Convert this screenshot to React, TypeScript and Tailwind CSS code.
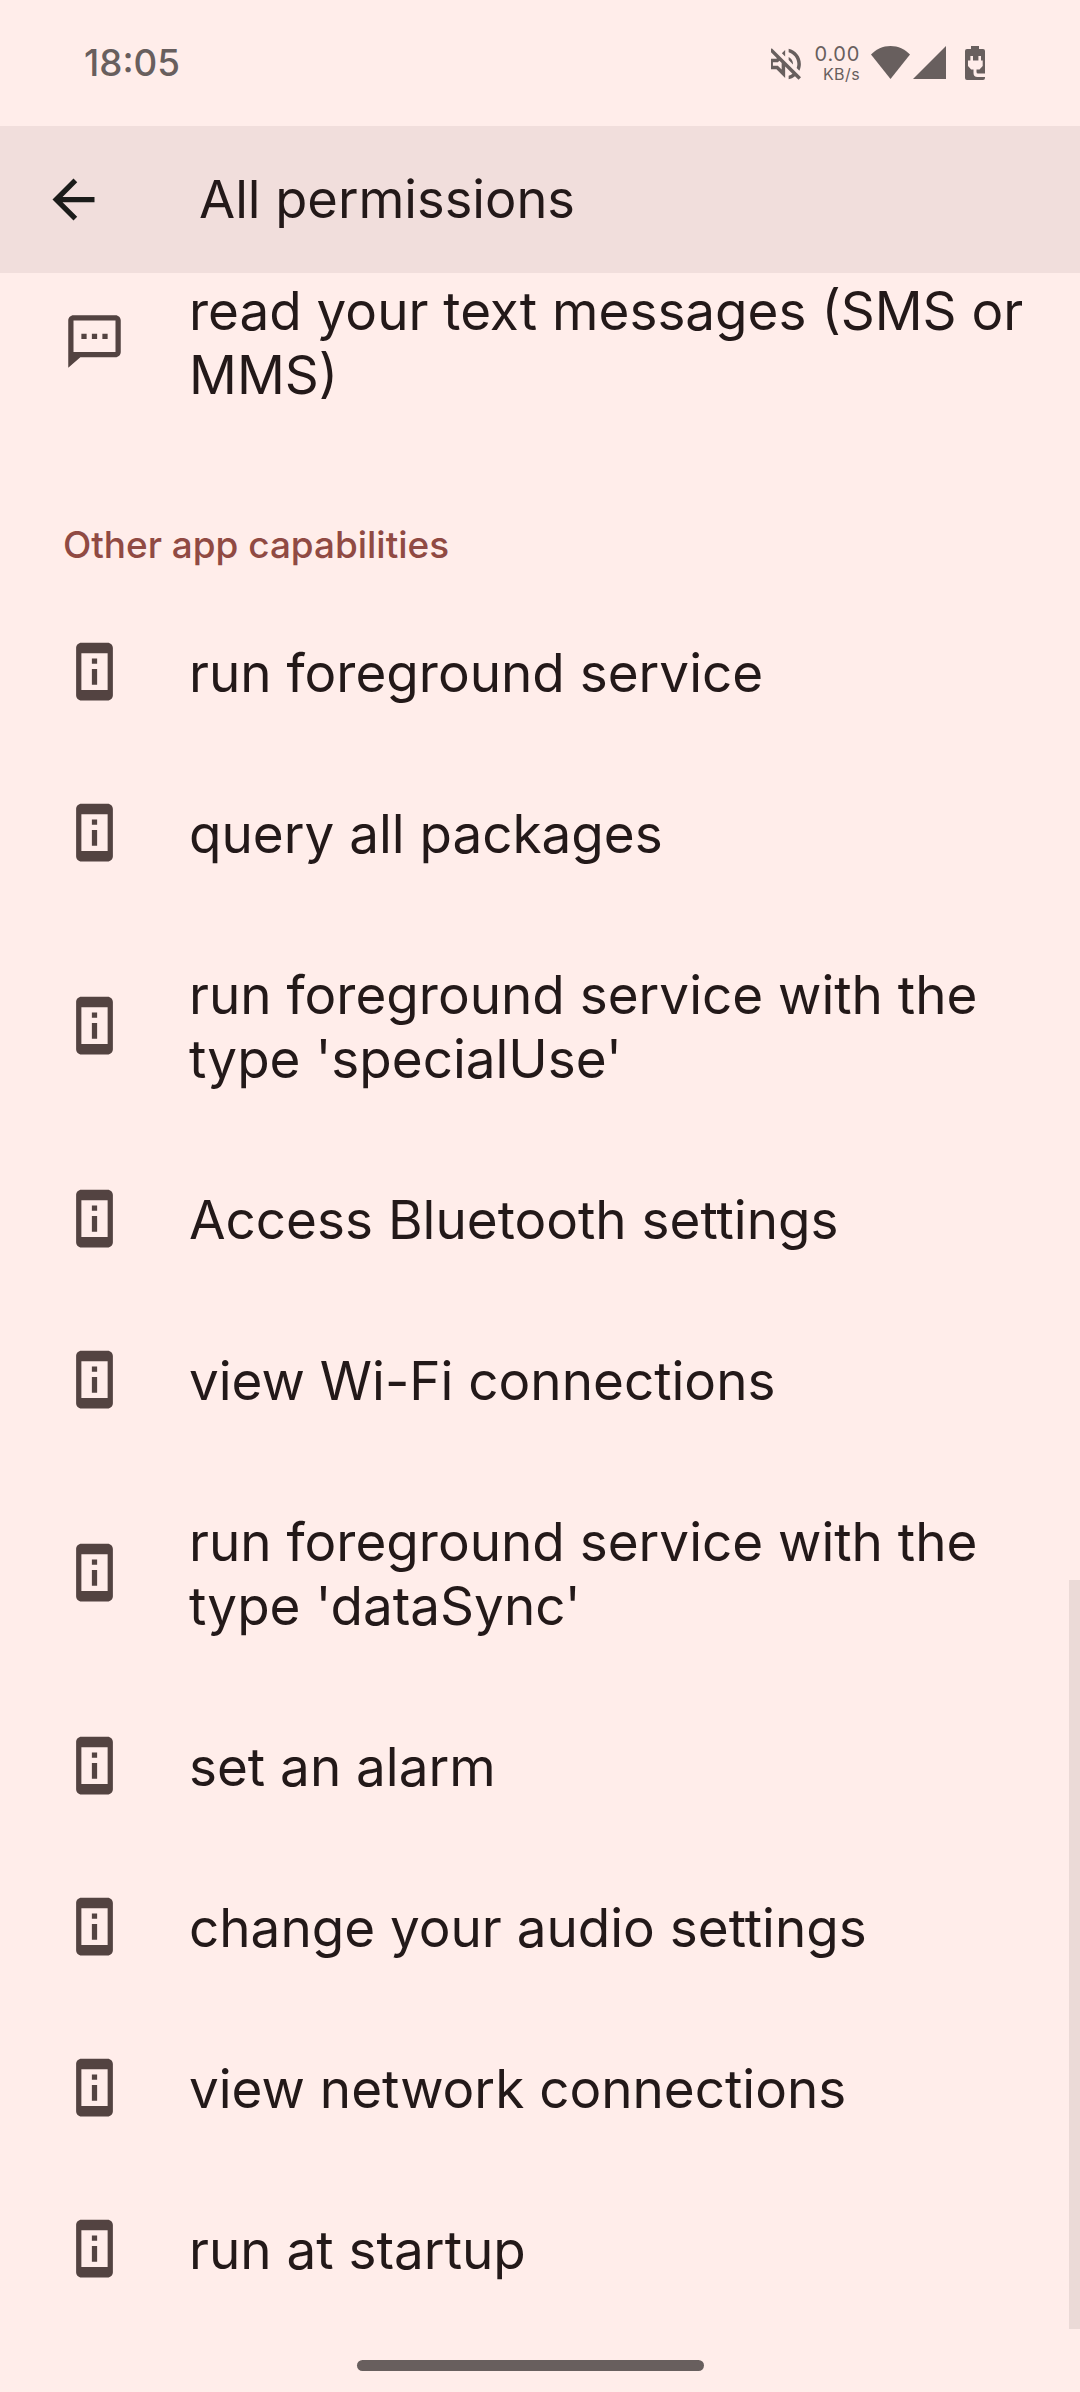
const permissions = [
  "run foreground service",
  "query all packages",
  "run foreground service with the type 'specialUse'",
  "Access Bluetooth settings",
  "view Wi-Fi connections",
  "run foreground service with the type 'dataSync'",
  "set an alarm",
  "change your audio settings",
  "view network connections",
  "run at startup",
];

const DeviceInfoIcon = () => (
  <svg viewBox="0 0 24 24" className="w-[63px] h-[63px] shrink-0" fill="currentColor">
    <path d="M13 7h-2v2h2V7zm0 4h-2v6h2v-6zm4-9.99L7 1c-1.1 0-2 .9-2 2v18c0 1.1.9 2 2 2h10c1.1 0 2-.9 2-2V3c0-1.1-.9-1.99-2-1.99zM17 19H7V5h10v14z" />
  </svg>
);

const SmsIcon = () => (
  <svg viewBox="0 0 24 24" className="w-[63px] h-[63px] shrink-0" fill="currentColor">
    <path d="M20 2H4c-1.1 0-2 .9-2 2v18l4.6-4H20c1.1 0 2-.9 2-2V4c0-1.1-.9-2-2-2zm0 14H4V4h16v12zM7 9h2v2H7V9zm4 0h2v2h-2V9zm4 0h2v2h-2V9z" />
  </svg>
);

const StatusBar = () => (
  <div className="flex h-[126px] items-center justify-between pl-[84px] pr-[95px] text-[#685f5e]">
    <span className="mt-px text-[36.75px] font-medium leading-none">18:05</span>
    <div className="flex h-[34px] items-start">
      <svg viewBox="3.9 2.93 17.17 18.14" className="mt-[2px] h-[32px] w-[30px]" fill="currentColor">
        <path d="M4.34 2.93L2.93 4.34 7.29 8.7 7 9H3v6h4l5 5v-6.59l4.18 4.18c-.65.49-1.38.88-2.18 1.11v2.06c1.34-.3 2.57-.92 3.61-1.75l2.05 2.05 1.41-1.41L4.34 2.93zM10 15.17L7.83 13H5v-2h2.83l.88-.88L10 11.41v3.76zM19 12c0 .82-.15 1.61-.41 2.34l1.53 1.53c.56-1.17.88-2.48.88-3.87 0-4.28-2.99-7.86-7-8.77v2.06c2.89.86 5 3.54 5 6.71zm-7-8l-1.88 1.88L12 7.76zm4.5 8c0-1.77-1.02-3.29-2.5-4.03v1.79l2.48 2.48c.01-.08.02-.16.02-.24z" />
      </svg>
      <div className="ml-[13px] flex w-[46px] flex-col items-end">
        <span className="text-[20px] leading-[16px] tracking-[0.7px]">0.00</span>
        <span className="mt-[4px] text-[16px] leading-[16px] tracking-[0.4px]">KB/s</span>
      </div>
      <svg viewBox="0 0 39 33" className="ml-[11px] h-[33px] w-[39px]" fill="currentColor">
        <path d="M0 8.6C5 3.2 11.8 0 19.5 0S34 3.2 39 8.6L19.5 33z" />
      </svg>
      <svg viewBox="0 0 33 33" className="ml-[3px] h-[33px] w-[33px]" fill="currentColor">
        <path d="M33 0v33H0z" />
      </svg>
      <svg viewBox="0 0 20 34" className="ml-[19px] h-[34px] w-[20px]" fill="currentColor">
        <path d="M6 0h8v3h4a2 2 0 0 1 2 2v22.500h-7a1.500 1.500 0 0 1-1.500-1.500v-2.500h3l3.200-3.500V14.500H16V10h-2.600v4.500H8V10H5.400v4.500H3V20l3.200 3.500h2.300V27a4 4 0 0 0 4 4H20v1a2 2 0 0 1-2 2H2a2 2 0 0 1-2-2V5a2 2 0 0 1 2-2h4z" />
      </svg>
    </div>
  </div>
);

const App = () => {
  return (
    <div className="flex h-[2392px] w-[1080px] flex-col overflow-hidden bg-[#ffedea] font-['Inter',sans-serif] text-[#231919]">
      <StatusBar />

      {/* App bar */}
      <header className="flex h-[147px] shrink-0 items-center bg-[#f1dedc] pl-[42px]">
        <svg viewBox="0 0 24 24" className="h-[63px] w-[63px]" fill="#1b1c1a">
          <path d="M20 11H7.83l5.59-5.59L12 4l-8 8 8 8 1.41-1.41L7.83 13H20v-2z" />
        </svg>
        <h1 className="-mt-[2px] ml-[94px] text-[52.4px] leading-[64px]">All permissions</h1>
      </header>

      {/* Scrolled permission list */}
      <main className="relative h-[2056px] shrink-0 overflow-hidden">
        <div className="-mt-[44px] flex h-[225px] items-center pl-[63px] text-[#534341]">
          <SmsIcon />
          <p className="-mb-px ml-[63px] mt-px w-[850px] text-[53px] leading-[64px] text-[#231919]">
            read your text messages (SMS or MMS)
          </p>
        </div>
        <h2 className="h-[137px] pl-[63px] pt-[68px] text-[36.9px] font-medium leading-[46px] text-[#904a43]">
          Other app capabilities
        </h2>
        <ul>
          {permissions.map((label) => (
            <li key={label} className="flex items-center py-[48.5px] pl-[63px] text-[#534341]">
              <DeviceInfoIcon />
              <p className="-mb-px ml-[63px] mt-px w-[850px] text-[53px] leading-[64px] text-[#231919]">{label}</p>
            </li>
          ))}
        </ul>
        <div className="absolute bottom-0 right-0 h-[749px] w-[11px] bg-[#ebdad7]" />
      </main>

      {/* Gesture bar */}
      <div className="ml-[357px] mt-[31px] h-[11px] w-[347px] shrink-0 rounded-full bg-[#685f5e]" />
    </div>
  );
};

export default App;
